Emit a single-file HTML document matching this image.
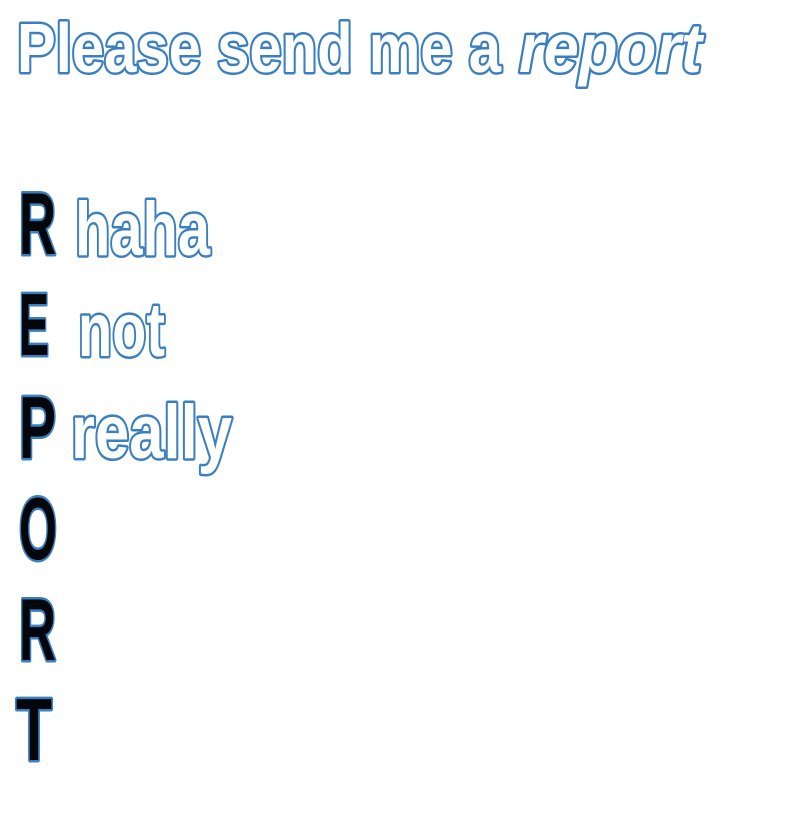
<!DOCTYPE html>
<html><head><style>html,body{margin:0;padding:0;background:#fff}svg{display:block}</style></head>
<body>
<svg width="800" height="819" viewBox="0 0 800 819" xmlns="http://www.w3.org/2000/svg">
<g font-family="'Liberation Sans Narrow','Liberation Sans',sans-serif" font-weight="bold" stroke="#3a7fc0" stroke-width="5" stroke-linejoin="round" paint-order="stroke">
<g fill="#fff">
<text x="17" y="72" font-size="70" textLength="484" lengthAdjust="spacingAndGlyphs">Please send me a</text>
<text x="519" y="72" font-size="70" font-style="italic" textLength="183" lengthAdjust="spacingAndGlyphs">report</text>
<text x="75" y="255" font-size="76" textLength="135" lengthAdjust="spacingAndGlyphs">haha</text>
<text x="78" y="356" font-size="76" textLength="87" lengthAdjust="spacingAndGlyphs">not</text>
<text x="71" y="458" font-size="76" textLength="161" lengthAdjust="spacingAndGlyphs">really</text>
</g>
<g fill="#03070c">
<text x="19" y="254" font-size="88" textLength="37" lengthAdjust="spacingAndGlyphs">R</text>
<text x="19" y="355" font-size="88" textLength="30" lengthAdjust="spacingAndGlyphs">E</text>
<text x="19" y="458" font-size="88" textLength="37" lengthAdjust="spacingAndGlyphs">P</text>
<text x="19" y="559" font-size="88" textLength="38" lengthAdjust="spacingAndGlyphs">O</text>
<text x="19" y="660" font-size="88" textLength="37" lengthAdjust="spacingAndGlyphs">R</text>
<text x="16" y="760" font-size="88" textLength="36" lengthAdjust="spacingAndGlyphs">T</text>
</g>
</g>
</svg>
</body></html>
